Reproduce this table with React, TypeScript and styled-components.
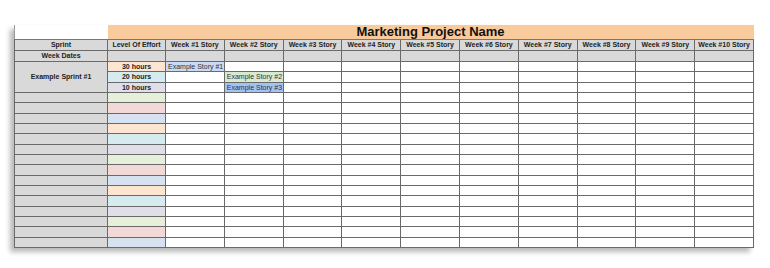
import React from 'react';
import styled, { createGlobalStyle } from 'styled-components';

const GlobalStyle = createGlobalStyle`
  html, body {
    margin: 0;
    padding: 0;
    background: #ffffff;
    font-family: 'Liberation Sans', Arial, sans-serif;
  }
`;

const Page = styled.div`
  width: 770px;
  height: 268px;
  padding: 25px 0 0 14px;
  box-sizing: border-box;
`;

const Sheet = styled.table`
  width: 740px;
  border-collapse: collapse;
  table-layout: fixed;
  box-shadow: -4px 4px 5px rgba(0, 0, 0, 0.28);
`;

const TitleBlank = styled.td`
  background: #ffffff;
  border-left: 1px solid #9a9a9a;
  border-bottom: 1px solid #777;
  height: 14px;
  padding: 0;
`;

const TitleCell = styled.td`
  background: #f9cb9c;
  border-bottom: 1px solid #777;
  height: 14px;
  padding: 0;
  text-align: center;
  font-size: 13px;
  font-weight: bold;
  line-height: 14px;
  color: #111;
`;

const HeadCell = styled.td`
  background: #d9d9d9;
  border: 1px solid #6a6a6a;
  height: 10px;
  padding: 0;
  text-align: center;
  font-size: 7px;
  font-weight: bold;
  line-height: 10px;
  color: #222;
  white-space: nowrap;
  overflow: hidden;
`;

const SprintCell = styled.td`
  background: #d9d9d9;
  border: 1px solid #6a6a6a;
  padding: 0;
  text-align: center;
  font-size: 7px;
  font-weight: bold;
  color: #222;
`;

const EffortCell = styled.td<{ $bg: string }>`
  background: ${(p) => p.$bg};
  border: 1px solid #6a6a6a;
  height: 9.33px;
  padding: 0;
  text-align: center;
  font-size: 7px;
  font-weight: bold;
  line-height: 9px;
  color: #222;
`;

const StoryCell = styled.td<{ $bg?: string }>`
  background: ${(p) => p.$bg ?? '#ffffff'};
  border: 1px solid #6a6a6a;
  padding: 0 0 0 2px;
  font-size: 7px;
  line-height: 9px;
  color: #333;
  white-space: nowrap;
  overflow: hidden;
`;

const effortColors = ['#fde5d2', '#d5ebf0', '#e0dfe8', '#e6efd9', '#f3d8d8', '#d6e2f0'];
const weeks = Array.from({ length: 10 }, (_, i) => `Week #${i + 1} Story`);
const hours = ['30 hours', '20 hours', '10 hours'];
const stories: Record<number, { col: number; text: string; bg: string }> = {
  0: { col: 0, text: 'Example Story #1', bg: '#c9daf8' },
  1: { col: 1, text: 'Example Story #2', bg: '#d9ead3' },
  2: { col: 1, text: 'Example Story #3', bg: '#a4c2f4' },
};

export default function App() {
  const rows = Array.from({ length: 18 }, (_, i) => i);

  return (
    <Page>
      <GlobalStyle />
      <Sheet>
        <colgroup>
          <col style={{ width: 93 }} />
          <col style={{ width: 58 }} />
          {weeks.map((w) => (
            <col key={w} />
          ))}
        </colgroup>
        <tbody>
          <tr>
            <TitleBlank />
            <TitleCell colSpan={11}>Marketing Project Name</TitleCell>
          </tr>
          <tr>
            <HeadCell>Sprint</HeadCell>
            <HeadCell>Level Of Effort</HeadCell>
            {weeks.map((w) => (
              <HeadCell key={w}>{w}</HeadCell>
            ))}
          </tr>
          <tr>
            <HeadCell>Week Dates</HeadCell>
            <HeadCell />
            {weeks.map((w) => (
              <HeadCell key={w} />
            ))}
          </tr>
          {rows.map((r) => (
            <tr key={r}>
              {r === 0 && <SprintCell rowSpan={3}>Example Sprint #1</SprintCell>}
              {r > 2 && <SprintCell />}
              <EffortCell $bg={effortColors[r % 6]}>{hours[r] ?? ''}</EffortCell>
              {weeks.map((w, c) => {
                const s = stories[r];
                return s && s.col === c ? (
                  <StoryCell key={w} $bg={s.bg}>
                    {s.text}
                  </StoryCell>
                ) : (
                  <StoryCell key={w} />
                );
              })}
            </tr>
          ))}
        </tbody>
      </Sheet>
    </Page>
  );
}
